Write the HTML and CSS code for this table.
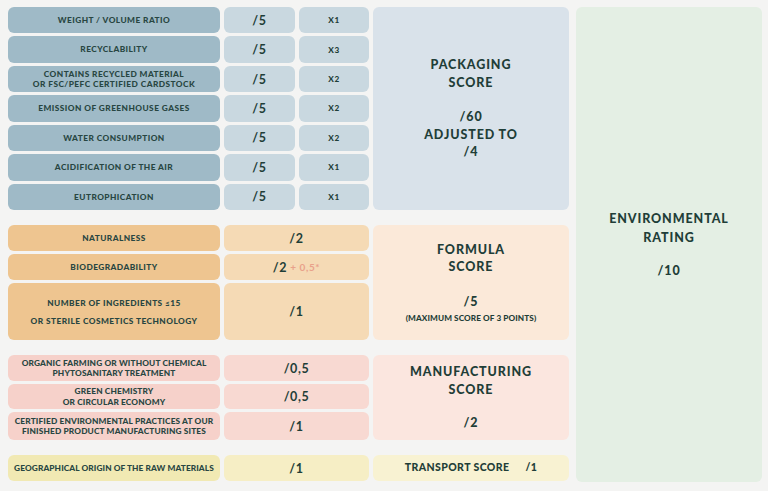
FILE: index.html
```html
<!DOCTYPE html>
<html lang="en">
<head>
<meta charset="utf-8">
<link rel="stylesheet" href="styles.css">
</head>
<body>
<div class="page">
  <div class="left">
    <section class="sec pack">
      <div class="lbl">Weight / Volume ratio</div><div class="val">/5</div><div class="mul">X1</div>
      <div class="score s-pack">
        <div>Packaging<br>score</div>
        <div class="sp">/60<br>Adjusted to<br>/4</div>
      </div>
      <div class="lbl">Recyclability</div><div class="val">/5</div><div class="mul">X3</div>
      <div class="lbl">Contains recycled material<br>or FSC/PEFC certified cardstock</div><div class="val">/5</div><div class="mul">X2</div>
      <div class="lbl">Emission of greenhouse gases</div><div class="val">/5</div><div class="mul">X2</div>
      <div class="lbl">Water consumption</div><div class="val">/5</div><div class="mul">X2</div>
      <div class="lbl">Acidification of the air</div><div class="val">/5</div><div class="mul">X1</div>
      <div class="lbl">Eutrophication</div><div class="val">/5</div><div class="mul">X1</div>
    </section>

    <section class="sec form">
      <div class="lbl">Naturalness</div><div class="val wide">/2</div>
      <div class="score s-form">
        <div>Formula<br>score</div>
        <div class="sp">/5<div class="note">(Maximum score of 3 points)</div></div>
      </div>
      <div class="lbl">Biodegradability</div><div class="val wide">/2 <span class="bonus">+ 0,5*</span></div>
      <div class="lbl tall">Number of ingredients ≤15<br>or sterile cosmetics technology</div><div class="val wide">/1</div>
    </section>

    <section class="sec manu">
      <div class="lbl">Organic farming or without chemical<br>phytosanitary treatment</div><div class="val wide">/0,5</div>
      <div class="score s-manu">
        <div>Manufacturing<br>score</div>
        <div class="sp">/2</div>
      </div>
      <div class="lbl">Green chemistry<br>or circular economy</div><div class="val wide">/0,5</div>
      <div class="lbl">Certified environmental practices at our<br>finished product manufacturing sites</div><div class="val wide">/1</div>
    </section>

    <section class="sec trans">
      <div class="lbl geo">Geographical origin of the raw materials</div><div class="val wide">/1</div>
      <div class="score s-trans"><span>Transport score</span><span class="tv">/1</span></div>
    </section>
  </div>
  <div class="env">
    <div>Environmental<br>rating</div>
    <div class="sp">/10</div>
  </div>
</div>
</body>
</html>
```

FILE: styles.css
```css
* { box-sizing: border-box; }
html, body { margin: 0; padding: 0; }
body {
  background: #f4f4f3;
  font-family: "Lato", "Open Sans", sans-serif;
  color: #1f3e38;
  width: 768px;
  height: 491px;
  overflow: hidden;
}
.page {
  display: flex;
  gap: 7px;
  padding: 7px 6px 0 8px;
}
.left {
  display: flex;
  flex-direction: column;
  gap: 15px;
  width: 561px;
}
.sec {
  display: grid;
  grid-template-columns: 212px 71px 70px 196px;
  column-gap: 4px;
  row-gap: 3px;
}
.pack { height: 203px; grid-template-rows: repeat(7, 1fr); }
.form { height: 115px; grid-template-rows: 26px 26px 57px; }
.manu { height: 85px; grid-template-rows: 26px 25px 28px; }
.trans { height: 26px; grid-template-rows: 26px; }

.lbl, .val, .mul, .score, .env {
  border-radius: 6px;
  display: flex;
  align-items: center;
  justify-content: center;
  text-align: center;
  text-transform: uppercase;
  font-weight: 900;
}
.lbl {
  font-size: 8.3px;
  line-height: 10.5px;
  letter-spacing: 0.45px;
  grid-column: 1;
  color: #284642;
}
.lbl.geo { letter-spacing: 0.1px; }
.manu .lbl { letter-spacing: 0.15px; }
.val {
  font-size: 12.5px;
  font-weight: 700;
  grid-column: 2;
  letter-spacing: 0.6px;
}
.val.wide { grid-column: 2 / 4; }
.mul {
  font-size: 8.2px;
  grid-column: 3;
  letter-spacing: 0.6px;
}
.score {
  grid-column: 4;
  grid-row: 1 / -1;
  flex-direction: column;
  font-size: 12.5px;
  line-height: 17.5px;
  letter-spacing: 0.9px;
}
.sp { margin-top: 17px; }
.note {
  font-size: 8.2px;
  line-height: 12px;
  letter-spacing: 0.1px;
  margin-top: 2px;
}
.s-form .sp { margin-top: 17px; }
.s-manu .sp { margin-top: 16px; }
.s-trans {
  flex-direction: row;
  font-size: 10.5px;
  letter-spacing: 0.4px;
}
.s-trans .tv { margin-left: 16px; }

.pack .lbl { background: #9fbac7; }
.pack .val, .pack .mul { background: #c9d8e0; }
.s-pack { background: #d9e2ea; }

.form .lbl { background: #eec590; }
.form .val { background: #f5dab5; }
.s-form { background: #fbe9d9; }
.lbl.tall { line-height: 18px; }
.bonus { color: #e9a18b; font-size: 10px; margin-left: 3px; }

.manu .lbl { background: #f6d1ca; }
.manu .val { background: #f8d9d2; }
.s-manu { background: #fbe6df; }

.trans .lbl { background: #f1e9b3; }
.trans .val { background: #f6eec5; }
.s-trans { background: #f8f2d2; }

.env {
  width: 186px;
  height: 475px;
  background: #e4efe4;
  flex-direction: column;
  font-size: 12.5px;
  line-height: 19px;
  letter-spacing: 0.9px;
}
.env .sp { margin-top: 14px; }
```
